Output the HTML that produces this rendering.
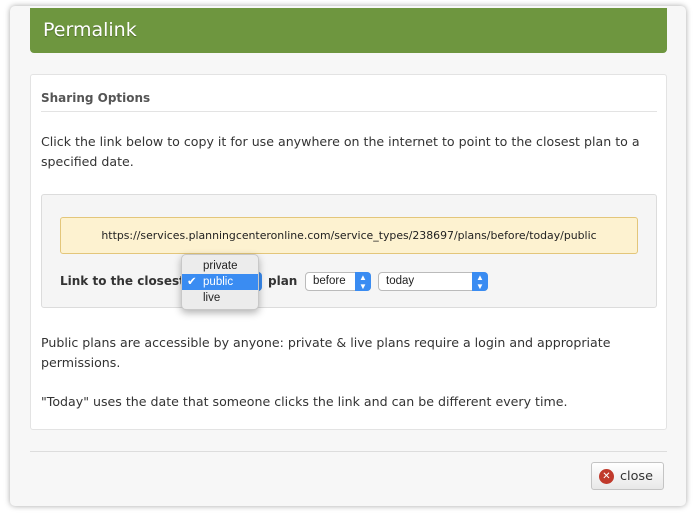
<!DOCTYPE html>
<html><head><style>
body{margin:0;width:696px;height:516px;background:#fff;font-family:"DejaVu Sans",sans-serif;position:relative;overflow:hidden}
.modal{position:absolute;left:10px;top:6px;width:676px;height:500px;background:#f7f7f7;border-radius:5px;box-shadow:0 0 6px rgba(0,0,0,.35)}
.hdr{position:absolute;left:30px;top:8px;width:637px;height:45px;background:#6e963f;border-radius:0 0 4px 4px;color:#fff;font-size:19px;line-height:45px;padding-left:13px;box-sizing:border-box;text-shadow:0 1px 1px rgba(0,0,0,.3)}
.panel{position:absolute;left:30px;top:74px;width:637px;height:356px;background:#fff;border:1px solid #e3e3e3;border-radius:3px;box-sizing:border-box}
.t{position:absolute;color:#333;font-size:12.6px;line-height:20px}
.inner{position:absolute;left:41px;top:194px;width:616px;height:114px;background:#f5f5f5;border:1px solid #dcdcdc;border-radius:3px;box-sizing:border-box}
.url{position:absolute;left:60px;top:217px;width:578px;height:37px;background:#fdf2d0;border:1px solid #e3c67a;border-radius:3px;box-sizing:border-box;font-size:10.9px;line-height:36px;text-align:center;color:#222}
.sel{position:absolute;height:19px;background:#fff;border:1px solid #bbb;border-radius:4px;box-sizing:border-box;font-family:"Liberation Sans",sans-serif;font-size:11.5px;line-height:17px;padding-left:7px;color:#222}
.sel .a{position:absolute;right:-1px;top:-1px;width:16px;height:19px;background:#3a8cf2;border-radius:0 4px 4px 0;color:#fff;font-size:8px;line-height:9px;text-align:center;padding-top:1px;box-sizing:border-box}
.dd{position:absolute;left:181px;top:254px;width:78px;height:56px;background:#ececec;border:1px solid #c8c8c8;border-radius:5px;box-shadow:0 3px 8px rgba(0,0,0,.3);box-sizing:border-box;font-family:"Liberation Sans",sans-serif;font-size:11.5px}
.dd div{position:absolute;left:0;width:76px;height:16px;line-height:16px;padding-left:21px;box-sizing:border-box;color:#222}
.btn{position:absolute;left:591px;top:462px;width:73px;height:28px;background:linear-gradient(#fff,#e8e8e8);border:1px solid #c4c4c4;border-radius:3px;box-sizing:border-box;font-size:12.8px;color:#333;line-height:27px;padding-left:28px}
.btn i{position:absolute;left:7px;top:6px;width:15px;height:15px;border-radius:50%;background:#c0392b;color:#fff;font-style:normal;font-size:10px;line-height:15px;text-align:center;font-weight:bold}
</style></head><body>
<div class="modal"></div>
<div class="hdr">Permalink</div>
<div class="panel"></div>
<div class="t" style="left:41px;top:88px;font-weight:bold;font-size:12px;color:#555">Sharing Options</div>
<div style="position:absolute;left:41px;top:111px;width:616px;height:1px;background:#e3e3e3"></div>
<div class="t" style="left:41px;top:132px;width:615px">Click the link below to copy it for use anywhere on the internet to point to the closest plan to a specified date.</div>
<div class="inner"></div>
<div class="url">https://services.planningcenteronline.com/service_types/238697/plans/before/today/public</div>
<div class="t" style="left:60px;top:271px;font-weight:bold;font-size:12px;color:#333">Link to the closest</div>
<div class="sel" style="left:240px;top:272px;width:22px"><span class="a">&#9650;<br>&#9660;</span></div>
<div class="t" style="left:268px;top:271px;font-weight:bold;font-size:12px">plan</div>
<div class="sel" style="left:305px;top:272px;width:66px">before<span class="a">&#9650;<br>&#9660;</span></div>
<div class="sel" style="left:378px;top:272px;width:110px">today<span class="a">&#9650;<br>&#9660;</span></div>
<div class="dd">
<div style="top:3px">private</div>
<div style="top:19px;background:#3a8cf2;color:#fff;padding-left:5px">&#10004;&nbsp;&nbsp;public</div>
<div style="top:35px">live</div>
</div>
<div class="t" style="left:41px;top:333px;width:615px">Public plans are accessible by anyone: private &amp; live plans require a login and appropriate permissions.</div>
<div class="t" style="left:41px;top:392px">"Today" uses the date that someone clicks the link and can be different every time.</div>
<div style="position:absolute;left:30px;top:451px;width:637px;height:1px;background:#ddd"></div>
<div class="btn"><i>✕</i>close</div>
</body></html>
